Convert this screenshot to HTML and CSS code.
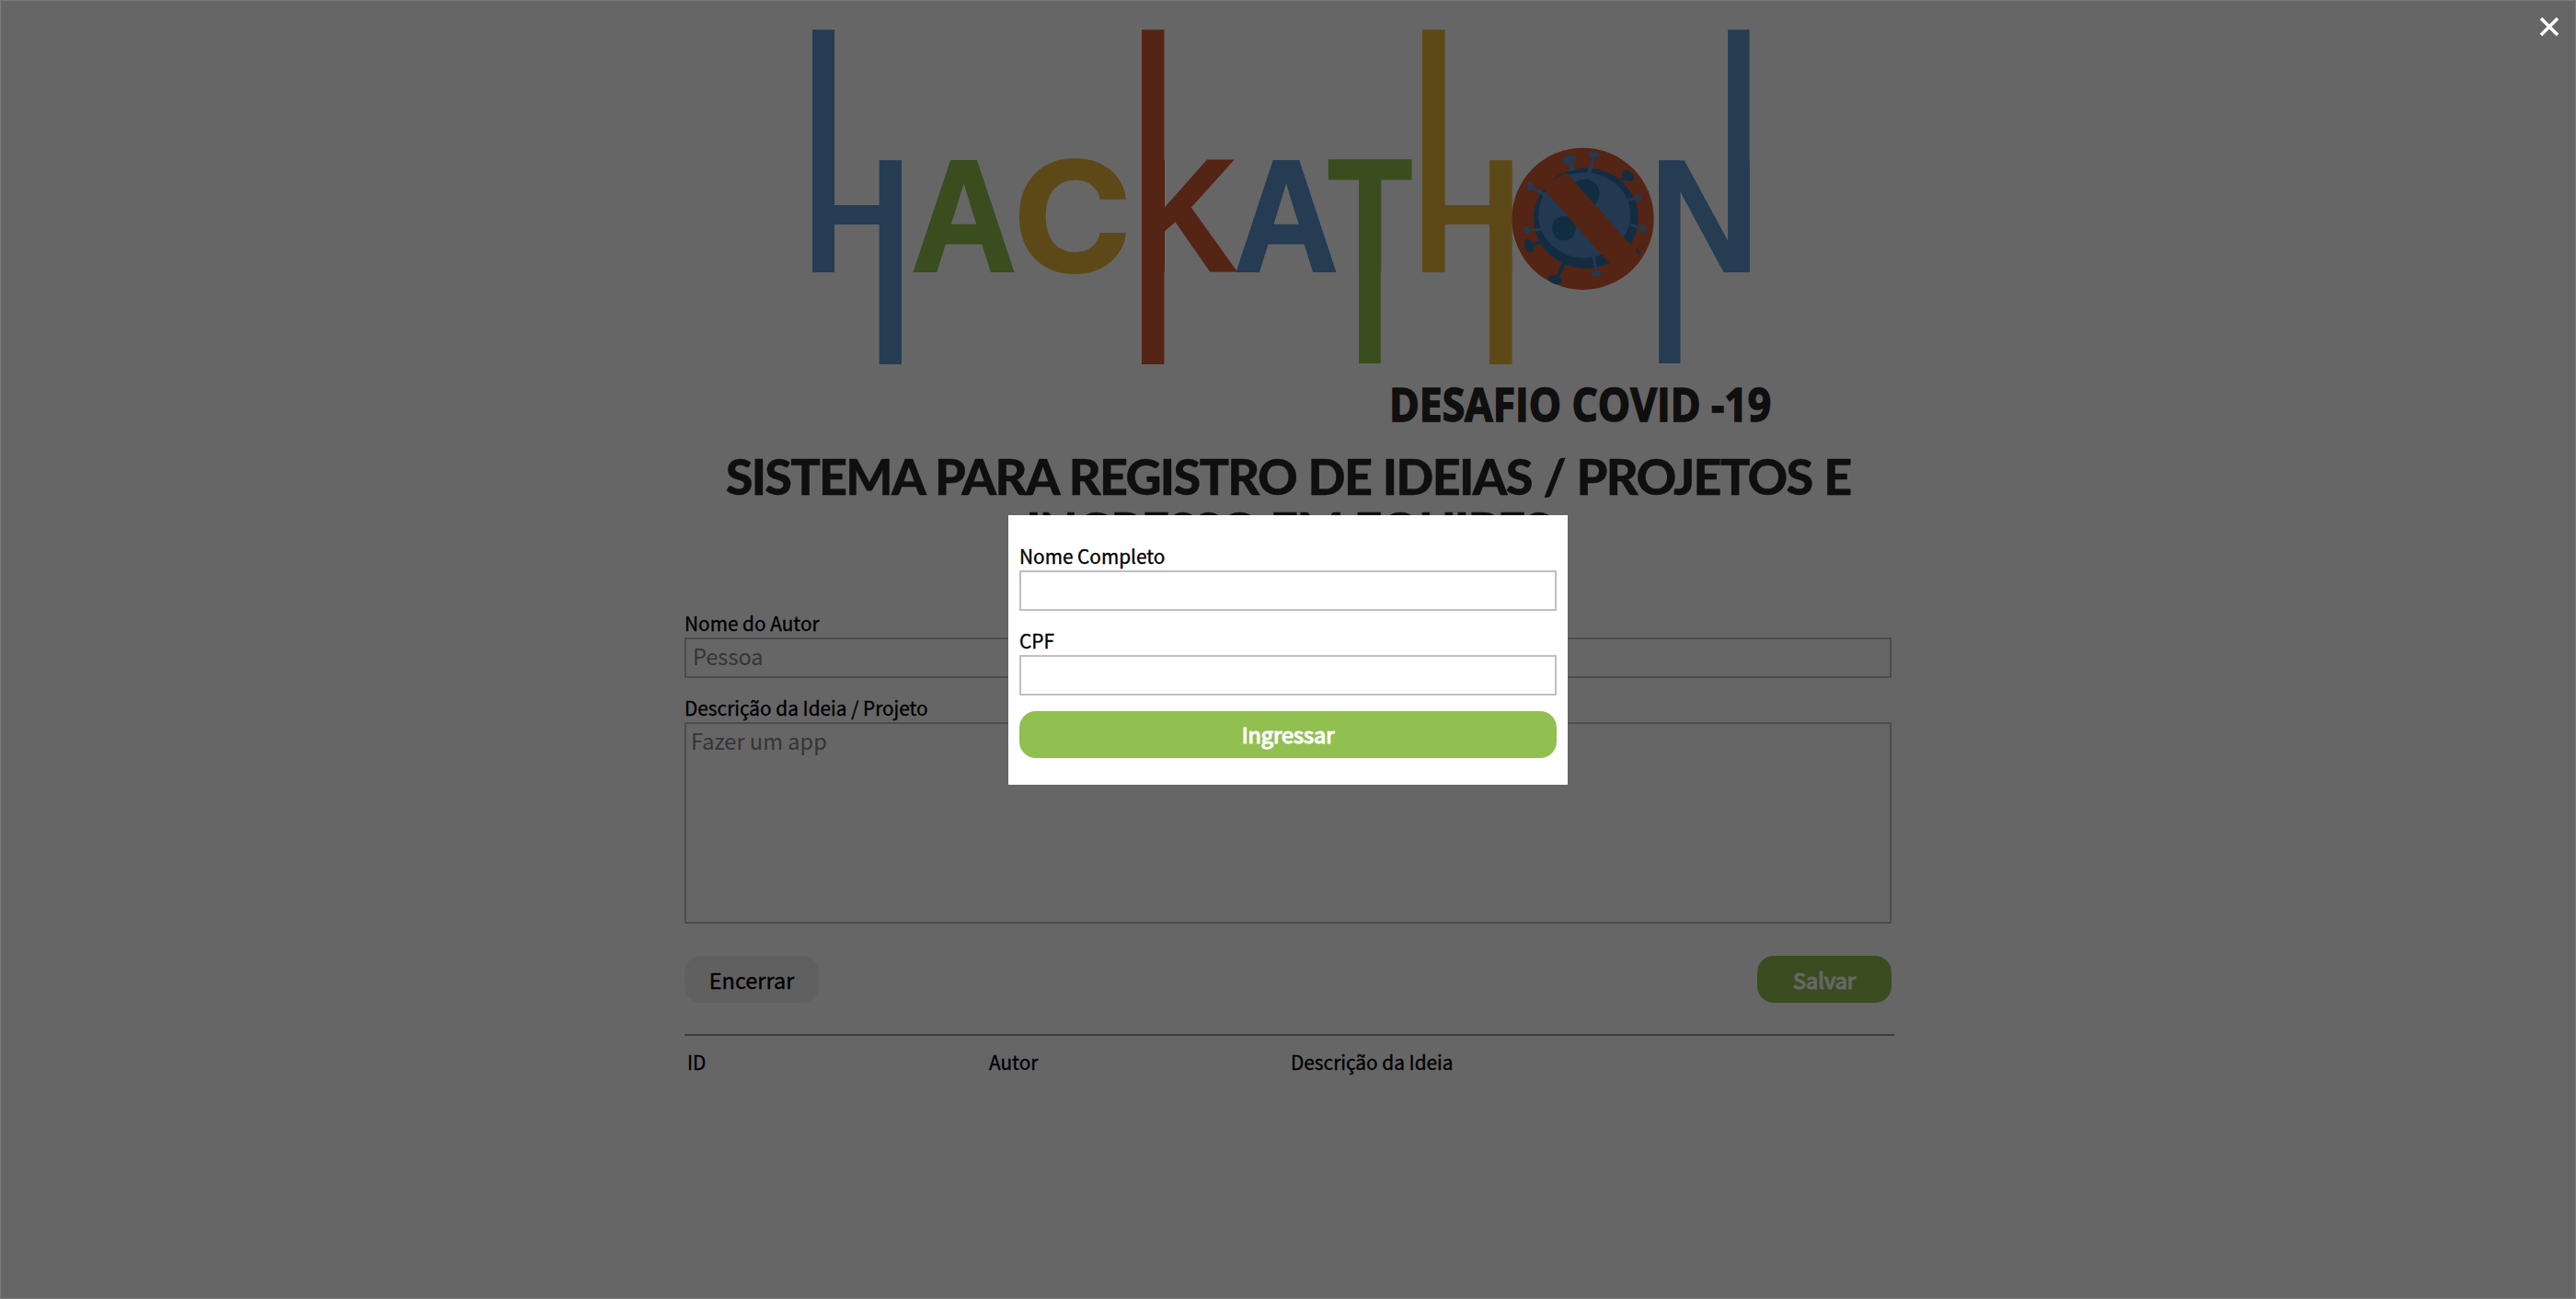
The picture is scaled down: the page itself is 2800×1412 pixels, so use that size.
FILE: index.html
```
<!DOCTYPE html>
<html lang="pt-BR">
<head>
<meta charset="utf-8">
<title>Hackathon - Desafio Covid-19</title>
<link rel="stylesheet" href="styles.css">
</head>
<body>
<main class="page">
  <svg class="logo" viewBox="744 0 1312 488" role="img" aria-label="Hackathon Desafio Covid-19">
    <g class="blue">
      <rect x="883" y="32.3" width="24.1" height="263.4"/>
      <rect x="955.7" y="174.3" width="24.3" height="221.7"/>
      <text class="letter" transform="translate(872 295.7) scale(.9345 1)">H</text>
    </g>
    <text class="letter bold green" transform="translate(990.4 294.2) scale(.914 1)">A</text>
    <text class="letter-c yellow" transform="translate(1101 294.7) scale(1.06 1)">C</text>
    <g class="red">
      <rect x="1241" y="32.3" width="24.4" height="363.7"/>
      <text class="letter bold red" transform="translate(1232 294.2) scale(.893 1)">K</text>
    </g>
    <text class="letter bold blue" transform="translate(1341.6 294.2) scale(.905 1)">A</text>
    <g class="green">
      <rect x="1477.1" y="180" width="23.7" height="215"/>
      <text class="letter bold green" transform="translate(1443.4 294.2) scale(.865 1)">T</text>
    </g>
    <g class="yellow">
      <rect x="1546" y="32.3" width="24.7" height="263.4"/>
      <rect x="1619" y="174.3" width="24.5" height="221.7"/>
      <text class="letter" transform="translate(1534.9 295.7) scale(.939 1)">H</text>
    </g>
    <g class="blue">
      <rect x="1803.1" y="174.3" width="23.4" height="220.7"/>
      <rect x="1878.1" y="32.3" width="23.4" height="263.4"/>
      <text class="letter" transform="translate(1791.9 295.7) scale(.951 1)">N</text>
    </g>
    <g transform="translate(1620 140) scale(.33333)">
      <circle class="red" cx="301.500" cy="293.500" r="231.500"/>
      <ellipse class="navy" cx="311.500" cy="291.500" rx="170.500" ry="163.500"/>
      <ellipse class="cell" cx="306.500" cy="281.500" rx="150" ry="139"/>
      <circle class="navy" cx="308" cy="212" r="48"/>
      <ellipse class="navy" cx="240" cy="324" rx="39" ry="40"/>
      <path class="red" d="M165 188L247 143L450 370L482 398L480 440L440 470L380 430L178 202Z"/>
      <g class="cell">
        <ellipse cx="256" cy="100" rx="24" ry="13" transform="rotate(-16 256 100)"/>
        <path d="M257 107h10l9 27-19 5z"/>
        <ellipse cx="337" cy="85" rx="17" ry="9"/>
        <path d="M333 88h7l-11 56h-13z"/>
        <ellipse cx="129" cy="187" rx="9" ry="16" transform="rotate(22 129 187)"/>
        <path d="M134 187l48 22v14l-22-10-24-18z"/>
        <ellipse cx="119" cy="331" rx="9" ry="15" transform="rotate(-12 119 331)"/>
        <path d="M122 327l44-3v8l-44 4z"/>
        <ellipse cx="345" cy="472" rx="17" ry="9" transform="rotate(-8 345 472)"/>
        <path d="M331 416l11 1 8 54h-7z"/>
        <ellipse cx="484" cy="226" rx="9" ry="15" transform="rotate(-18 484 226)"/>
        <path d="M447 227l35-5v6l-34 8z"/>
        <ellipse cx="499" cy="326" rx="9" ry="16" transform="rotate(10 499 326)"/>
        <path d="M455 308l42 14v6l-42-11z"/>
      </g>
      <g class="navy">
        <ellipse cx="449" cy="154" rx="22" ry="15" transform="rotate(38 449 154)"/>
        <path d="M438 152l9 6-10 13-16-7z"/>
        <ellipse cx="126" cy="382" rx="14" ry="23" transform="rotate(-24 126 382)"/>
        <path d="M132 375l34-14 10 13-42 10z"/>
        <ellipse cx="212" cy="492" rx="24" ry="14" transform="rotate(14 212 492)"/>
        <path d="M233 434l15 4-28 52h-8z"/>
        <path d="M473 393l9-1 6 12-3 9z"/>
      </g>
    </g>
    <text class="tagline" x="1510" y="458" textLength="415" lengthAdjust="spacingAndGlyphs">DESAFIO COVID -19</text>
  </svg>
  <h1 class="title">SISTEMA PARA REGISTRO DE IDEIAS / PROJETOS E<br>INGRESSO EM EQUIPES</h1>
  <form class="form">
    <label class="field">Nome do Autor<input class="input" type="text" placeholder="Pessoa"></label>
    <label class="field">Descrição da Ideia / Projeto<textarea class="input area" placeholder="Fazer um app"></textarea></label>
    <div class="actions">
      <button class="btn plain" type="button">Encerrar</button>
      <button class="btn primary save" type="button">Salvar</button>
    </div>
  </form>
  <div class="ideas">
    <span>ID</span><span>Autor</span><span>Descrição da Ideia</span>
  </div>
</main>
<div class="overlay">
  <form class="modal">
    <label class="field">Nome Completo<input class="input" type="text"></label>
    <label class="field">CPF<input class="input" type="text"></label>
    <button class="btn primary" type="button">Ingressar</button>
  </form>
  <svg class="close" viewBox="0 0 22 22" aria-label="Fechar"><path d="M2 2L20 20M20 2L2 20"/></svg>
</div>
</body>
</html>
```

FILE: styles.css
```
* { box-sizing: border-box; }
body {
  margin: 0;
  height: 1412px;
  overflow: hidden;
  background: #fff;
  color: #000;
  font: 400 20.8px/30px "Noto Sans CJK JP", "Noto Sans", sans-serif;
  -webkit-text-stroke: .35px;
}
.page { width: 1312px; margin: 0 auto; }
.logo { display: block; width: 1312px; height: 488px; -webkit-text-stroke: 0; }
.letter { font: 700 176.5px "Liberation Sans", sans-serif; }
.letter.bold { font-size: 173px; stroke-width: 3px; }
.letter-c { font: 700 165px Inter, sans-serif; stroke-width: 2px; }
.tagline { font: 700 50.5px "Open Sans", sans-serif; fill: #262626; stroke: #262626; stroke-width: 1.6px; }
.blue { fill: #5c96d0; }
.green { fill: #8fc04e; }
.yellow { fill: #e8b63e; }
.red { fill: #d25a36; }
text.blue { stroke: #5c96d0; }
text.green { stroke: #8fc04e; }
text.yellow { stroke: #e8b63e; }
text.red { stroke: #d25a36; }
.navy { fill: #2d70a5; }
.cell { fill: #578ecd; }
.title {
  margin: 0;
  padding: 1px 0 57px;
  color: #262626;
  font: 900 54px/58px Lato, sans-serif;
  letter-spacing: -1.75px;
  word-spacing: 1.5px;
  text-align: center;
  white-space: nowrap;
}
.form, .modal { display: flex; flex-direction: column; gap: 17px; }
.field { display: flex; flex-direction: column; gap: 1px; }
.input {
  width: 100%;
  height: 44px;
  margin: 0;
  padding: 0 7px 4px;
  border: 2px solid #bfbfbf;
  border-radius: 0;
  background: #fff;
  font: 400 23.6px/36px "Noto Sans CJK JP", sans-serif;
  -webkit-text-stroke: 0;
}
.input::placeholder { color: #858585; }
.area { height: 219px; padding: 0 5px; resize: none; }
.actions { display: flex; justify-content: space-between; margin-top: 18px; }
.btn {
  height: 51px;
  padding: 0;
  border: 0;
  border-radius: 18px;
  font: 400 23.5px/48px "Noto Sans CJK JP", sans-serif;
}
.plain { width: 146px; background: #f0f0f0; color: #000; -webkit-text-stroke: .35px; }
.primary { background: #91bf50; color: #fff; -webkit-text-stroke: 1.2px; }
.save { width: 146px; }
.ideas {
  display: grid;
  grid-template-columns: 328px 328px 1fr;
  width: 1315px;
  margin-top: 34px;
  padding: 13px 3px;
  border-top: 2px solid #9a9a9a;
}
.overlay {
  position: fixed;
  inset: 0;
  display: flex;
  align-items: center;
  justify-content: center;
  background: rgba(0, 0, 0, .6);
  box-shadow: inset 0 0 0 1px #7b7b7b;
}
.modal { width: 608px; padding: 29px 12px; background: #fff; }
.close { position: absolute; top: 18px; right: 18px; width: 22px; height: 22px; stroke: #fff; stroke-width: 3.6; fill: none; }
```
